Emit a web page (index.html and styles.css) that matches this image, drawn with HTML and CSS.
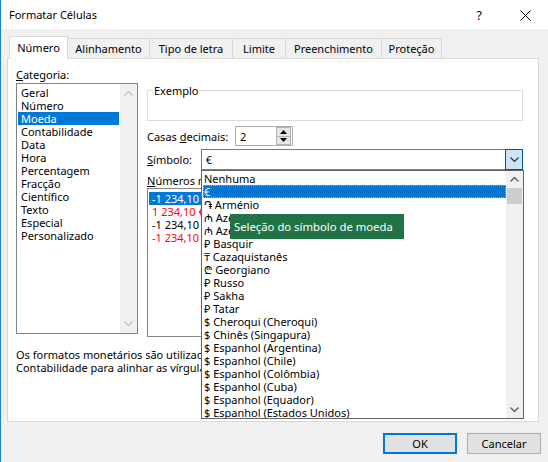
FILE: index.html
```html
<!DOCTYPE html>
<html lang="pt">
<head>
<meta charset="utf-8">
<title>Formatar Células</title>
<link rel="stylesheet" href="styles.css">
</head>
<body>
<div class="window">
  <div class="titlebar">
    <span class="title">Formatar Células</span>
    <span class="help">?</span>
    <svg class="close" width="11" height="11" viewBox="0 0 11 11"><path d="M0.5 0.5 L10.5 10.5 M10.5 0.5 L0.5 10.5" stroke="#000" stroke-width="1" fill="none"/></svg>
  </div>
  <div class="tabs">
    <div class="tab active">Número</div>
    <div class="tab">Alinhamento</div>
    <div class="tab">Tipo de letra</div>
    <div class="tab">Limite</div>
    <div class="tab">Preenchimento</div>
    <div class="tab">Proteção</div>
  </div>
  <div class="panel">
    <div class="top">
      <div class="left">
        <div class="label"><u>C</u>ategoria:</div>
        <div class="listbox cat">
          <div class="items">
            <div class="item">Geral</div>
            <div class="item">Número</div>
            <div class="item sel">Moeda</div>
            <div class="item">Contabilidade</div>
            <div class="item">Data</div>
            <div class="item">Hora</div>
            <div class="item">Percentagem</div>
            <div class="item">Fracção</div>
            <div class="item">Científico</div>
            <div class="item">Texto</div>
            <div class="item">Especial</div>
            <div class="item">Personalizado</div>
          </div>
          <div class="vscroll disabled">
            <svg class="arrow" width="9" height="5" viewBox="0 0 9 5"><path d="M0.5 4.5 L4.5 0.5 L8.5 4.5" stroke="currentColor" stroke-width="1.4" fill="none"/></svg>
            <svg class="arrow" width="9" height="5" viewBox="0 0 9 5"><path d="M0.5 0.5 L4.5 4.5 L8.5 0.5" stroke="currentColor" stroke-width="1.4" fill="none"/></svg>
          </div>
        </div>
      </div>
      <div class="right">
        <div class="group"><div class="group-title">Exemplo</div></div>
        <div class="row decimals">
          <span class="row-label">Casas <u>d</u>ecimais:</span>
          <div class="spin-input">
            <span>2</span>
            <div class="spin">
              <div class="spin-btn"><svg width="7" height="4" viewBox="0 0 7 4"><path d="M0 4 L3.5 0 L7 4 Z" fill="#000"/></svg></div>
              <div class="spin-btn"><svg width="7" height="4" viewBox="0 0 7 4"><path d="M0 0 L3.5 4 L7 0 Z" fill="#000"/></svg></div>
            </div>
          </div>
        </div>
        <div class="row symbol">
          <span class="row-label sym-label"><u>S</u>ímbolo:</span>
          <div class="combo">
            <span class="combo-text">€</span>
            <div class="combo-btn"><svg width="9" height="5" viewBox="0 0 9 5"><path d="M0.5 0.5 L4.5 4.5 L8.5 0.5" stroke="#333" stroke-width="1.2" fill="none"/></svg></div>
          </div>
        </div>
        <div class="label neg-label"><u>N</u>úmeros negativos:</div>
        <div class="listbox neg">
          <div class="items">
            <div class="item sel">-1 234,10 €</div>
            <div class="item red">1 234,10 €</div>
            <div class="item">-1 234,10 €</div>
            <div class="item red">-1 234,10 €</div>
          </div>
        </div>
      </div>
    </div>
    <div class="desc">
      <div class="line">Os formatos monetários são utilizados para valores monetários gerais. Utilize os formatos de</div>
      <div class="line">Contabilidade para alinhar as vírgulas decimais numa coluna.</div>
    </div>

    <div class="dropdown">
      <div class="dd-items">
        <div class="dd-item">Nenhuma</div>
        <div class="dd-item sel">€</div>
        <div class="dd-item">֏ Arménio</div>
        <div class="dd-item">₼ Azerbaijano (Cirílico)</div>
        <div class="dd-item">₼ Azerbaijano (Latim)</div>
        <div class="dd-item">₽ Basquir</div>
        <div class="dd-item">₸ Cazaquistanês</div>
        <div class="dd-item">₾ Georgiano</div>
        <div class="dd-item">₽ Russo</div>
        <div class="dd-item">₽ Sakha</div>
        <div class="dd-item">₽ Tatar</div>
        <div class="dd-item">$ Cheroqui (Cheroqui)</div>
        <div class="dd-item">$ Chinês (Singapura)</div>
        <div class="dd-item">$ Espanhol (Argentina)</div>
        <div class="dd-item">$ Espanhol (Chile)</div>
        <div class="dd-item">$ Espanhol (Colômbia)</div>
        <div class="dd-item">$ Espanhol (Cuba)</div>
        <div class="dd-item">$ Espanhol (Equador)</div>
        <div class="dd-item">$ Espanhol (Estados Unidos)</div>
      </div>
      <div class="vscroll dd-scroll">
        <svg class="arrow" width="9" height="5" viewBox="0 0 9 5"><path d="M0.5 4.5 L4.5 0.5 L8.5 4.5" stroke="currentColor" stroke-width="1.4" fill="none"/></svg>
        <div class="thumb"></div>
        <svg class="arrow down" width="9" height="5" viewBox="0 0 9 5"><path d="M0.5 0.5 L4.5 4.5 L8.5 0.5" stroke="currentColor" stroke-width="1.4" fill="none"/></svg>
      </div>
    </div>

    <div class="tooltip">Seleção do símbolo de moeda</div>
  </div>
  <div class="buttons">
    <button class="btn default">OK</button>
    <button class="btn">Cancelar</button>
  </div>
</div>
</body>
</html>
```

FILE: styles.css
```css
* { box-sizing: border-box; }

html, body {
  margin: 0;
  padding: 0;
  background: #f0f0f0;
}

body {
  font-family: "Noto Sans", "DejaVu Sans", sans-serif;
  font-size: 11px;
  color: #000;
  line-height: 13px;
}

u { text-decoration: underline; text-underline-offset: 1px; }

.window {
  width: 548px;
  height: 462px;
  background: #f0f0f0;
  border-left: 1px solid #1883d7;
  overflow: hidden;
}

/* title bar */
.titlebar {
  height: 29px;
  background: #fff;
  display: flex;
  align-items: center;
}
.title {
  padding-left: 8px;
  font-size: 11px;
}
.help {
  margin-left: auto;
  margin-right: 38px;
  font-size: 12.5px;
  padding-top: 2px;
}
.close {
  margin-right: 17px;
  margin-top: 2px;
}

/* tabs */
.tabs {
  height: 29px;
  display: flex;
  align-items: flex-end;
  padding-left: 8px;
}
.tab {
  height: 20px;
  border: 1px solid #d9d9d9;
  border-bottom: none;
  background: #f0f0f0;
  display: flex;
  align-items: center;
  justify-content: center;
  margin-left: -1px;
  white-space: nowrap;
}
.tab:nth-child(1) { width: 59px; margin-left: 0; }
.tab:nth-child(2) { width: 83px; }
.tab:nth-child(3) { width: 84px; }
.tab:nth-child(4) { width: 54px; }
.tab:nth-child(5) { width: 97px; }
.tab:nth-child(6) { width: 61px; }
.tab.active {
  height: 23px;
  margin-bottom: -1px;
  background: #fff;
  position: relative;
  z-index: 1;
  padding-bottom: 2px;
}

/* panel */
.panel {
  margin-left: 6px;
  width: 532px;
  height: 364px;
  border: 1px solid #d9d9d9;
  background: #fff;
  position: relative;
  padding-left: 8px;
}

.top {
  display: flex;
}
.left {
  width: 122px;
  padding-top: 9px;
}
.left .label { margin-bottom: 2px; }

.listbox {
  border: 1px solid #828282;
  background: #fff;
  display: flex;
  overflow: hidden;
}
.listbox .items {
  flex: 1;
  padding-top: 2px;
}
.item {
  margin: 0 1px;
  padding-left: 3px;
  height: 13px;
  white-space: nowrap;
}
.item.sel {
  background: #0078d7;
  color: #fff;
}
.item.red { color: #ff0000; }

.cat { height: 251px; }

.vscroll {
  width: 17px;
  background: #f0f0f0;
  display: flex;
  flex-direction: column;
  align-items: center;
  color: #606060;
}
.vscroll.disabled { color: #c2c2c2; }
.vscroll .arrow { margin-top: 7px; }
.vscroll .arrow:last-child { margin-top: auto; margin-bottom: 7px; }

.right {
  margin-left: 9px;
  width: 376px;
  padding-top: 31px;
}

.group {
  height: 31px;
  border: 1px solid #dcdcdc;
}
.group-title {
  width: fit-content;
  margin: -7px 0 0 5px;
  padding: 0 1px;
  background: #fff;
}

.row {
  display: flex;
  align-items: center;
}
.decimals {
  margin-top: 5px;
  height: 20px;
}
.row-label { width: 88px; }
.sym-label { width: 54px; }

.spin-input {
  width: 58px;
  height: 20px;
  border: 1px solid #abadb3;
  display: flex;
  align-items: center;
  padding-left: 4px;
}
.spin {
  margin-left: auto;
  margin-right: 1px;
  width: 15px;
  height: 18px;
  border: 1px solid #b4b4b4;
  display: flex;
  flex-direction: column;
}
.spin-btn {
  flex: 1;
  background: #e6e6e6;
  display: flex;
  align-items: center;
  justify-content: center;
}
.spin-btn + .spin-btn { border-top: 1px solid #b4b4b4; }

.symbol {
  margin-top: 3px;
  height: 21px;
}
.combo {
  width: 323px;
  height: 21px;
  border: 1px solid #7a7a7a;
  display: flex;
  align-items: center;
}
.combo-text { padding-left: 4px; }
.combo-btn {
  margin: -1px -1px -1px auto;
  width: 18px;
  height: 21px;
  background: #cce4f7;
  border: 1px solid #005499;
  display: flex;
  align-items: center;
  justify-content: center;
}

.neg-label { margin-top: 4px; }
.neg {
  margin-top: 1px;
  height: 149px;
  width: 376px;
}
.neg .items { padding-top: 3px; }

.desc {
  margin-top: 11px;
}
.desc .line { white-space: nowrap; }

/* dropdown */
.dropdown {
  position: absolute;
  left: 193px;
  top: 111px;
  width: 323px;
  height: 249px;
  border: 1px solid #646464;
  background: #fff;
  display: flex;
  z-index: 2;
}
.dd-items {
  flex: 1;
  padding-top: 1px;
  overflow: hidden;
}
.dd-item {
  margin-left: 1px;
  padding-left: 1px;
  height: 13px;
  white-space: nowrap;
}
.dd-item.sel {
  background: #0078d7;
  color: #fff;
  outline: 1px dotted #f5a623;
  outline-offset: -1px;
}
.dd-scroll { color: #606060; }
.dd-scroll .arrow { margin-top: 6px; }
.dd-scroll .thumb {
  margin-top: 6px;
  width: 15px;
  height: 16px;
  background: #cdcdcd;
}
.dd-scroll .arrow.down { margin-top: auto; margin-bottom: 6px; }

/* tooltip */
.tooltip {
  position: absolute;
  left: 222px;
  top: 155px;
  width: 174px;
  height: 25px;
  background: #217346;
  color: #fff;
  font-size: 11.3px;
  line-height: 25px;
  padding-left: 4px;
  white-space: nowrap;
  z-index: 3;
}

/* buttons */
.buttons {
  display: flex;
  justify-content: flex-end;
  gap: 10px;
  padding-top: 11px;
  padding-right: 7px;
}
.btn {
  width: 74px;
  height: 21px;
  background: #e1e1e1;
  border: 1px solid #adadad;
  font-family: "Noto Sans", "DejaVu Sans", sans-serif;
  font-size: 11px;
  color: #000;
  padding: 0;
  line-height: 13px;
}
.btn.default {
  border: 2px solid #0078d7;
}
```
